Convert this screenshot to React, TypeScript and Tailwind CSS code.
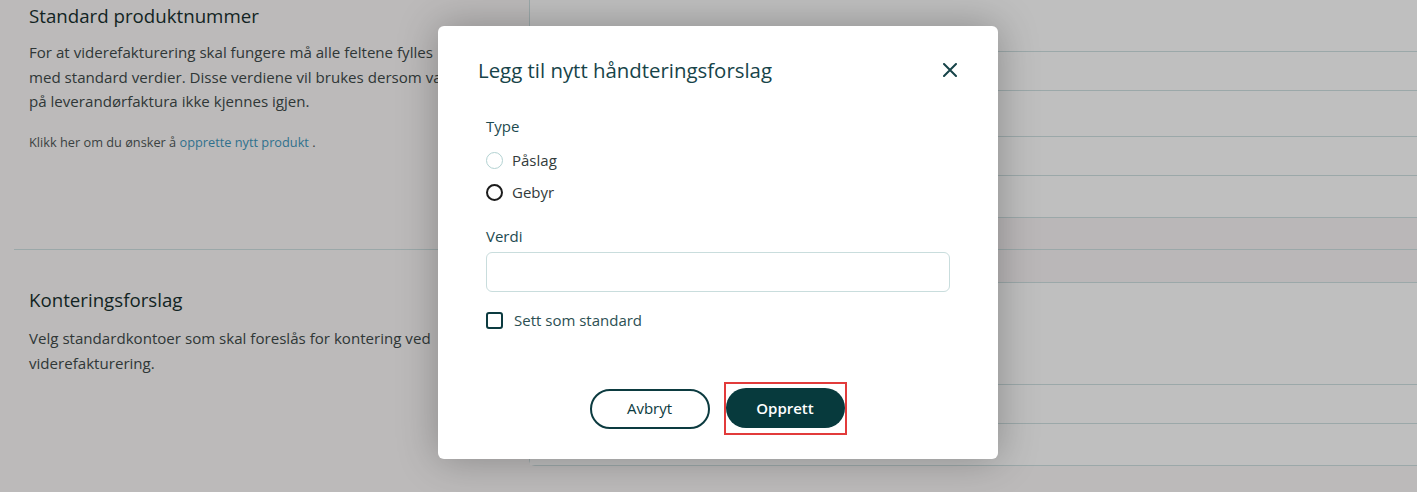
import React from "react";

const rows = [
  { h: "h-[52px]", dark: false },
  { h: "h-[39px]", dark: false },
  { h: "h-[46px]", dark: false },
  { h: "h-[39px]", dark: false },
  { h: "h-[42px]", dark: false },
  { h: "h-[32px]", dark: true },
  { h: "h-[33px]", dark: true },
  { h: "h-[102px]", dark: false },
  { h: "h-[39px]", dark: false },
  { h: "h-[41px]", dark: false },
];

export default function App() {
  return (
    <div
      className="relative h-[492px] w-full overflow-hidden bg-[#fbf9f9]"
      style={{ fontFamily: '"Open Sans", "Noto Sans", sans-serif' }}
    >
      {/* underlying page */}
      <div className="flex">
        <div className="w-[529px] shrink-0">
          <div className="ml-[14px] h-[250px] border-b border-[#cfe0e2] pl-[15px] pt-[3px]">
            <h2 className="text-[18.7px] leading-[26px] text-[#18302f]">Standard produktnummer</h2>
            <p className="mt-[11px] text-[15.1px] leading-[24.5px] text-[#404a4a] whitespace-nowrap">
              For at viderefakturering skal fungere må alle feltene fylles
              <br />
              med standard verdier. Disse verdiene vil brukes dersom varer
              <br />
              på leverandørfaktura ikke kjennes igjen.
            </p>
            <p className="mt-[19px] text-[12.75px] leading-[18px] text-[#4f5757]">
              Klikk her om du ønsker å <span className="text-[#3f97bd]">opprette nytt produkt</span> .
            </p>
          </div>
          <div className="ml-[14px] pl-[15px] pt-[37px]">
            <h2 className="text-[18.7px] leading-[26px] text-[#18302f]">Konteringsforslag</h2>
            <p className="mt-[13px] text-[15.1px] leading-[24.5px] text-[#404a4a] whitespace-nowrap">
              Velg standardkontoer som skal foreslås for kontering ved
              <br />
              viderefakturering.
            </p>
          </div>
        </div>
        <div className="flex-1 rounded-bl-md border-b border-l border-[#cfe0e2] bg-white">
          {rows.map((r, i) => (
            <div
              key={i}
              className={`${r.h} ${i < rows.length - 1 ? "border-b border-[#cfe0e2]" : ""} ${
                r.dark ? "bg-[#f8f5f6]" : "bg-white"
              }`}
            />
          ))}
        </div>
      </div>

      {/* overlay */}
      <div className="absolute inset-0 bg-black/25" />

      {/* modal */}
      <div className="absolute left-[438px] top-[26px] w-[560px] rounded-md bg-white pb-[24px] shadow-[0_0_40px_rgba(0,0,0,0.28)]">
        <div className="flex items-center justify-between pl-10 pr-[41px] pt-[30px]">
          <h3 className="text-[20.4px] leading-[28px] text-[#174449]">Legg til nytt håndteringsforslag</h3>
          <svg width="14" height="14" viewBox="0 0 14 14" className="text-[#174449]">
            <path d="M1 1 L13 13 M13 1 L1 13" stroke="currentColor" strokeWidth="2" strokeLinecap="round" />
          </svg>
        </div>
        <div className="px-12">
          <div className="mt-[31px] text-[15px] leading-[22px] text-[#1d4a4f]">Type</div>
          <div className="mt-[12px] flex h-[22px] items-center gap-[9px]">
            <span className="h-[17px] w-[17px] rounded-full border-[1.5px] border-[#b3d2d2]" />
            <span className="text-[15px] leading-[22px] text-[#333b3b]">Påslag</span>
          </div>
          <div className="mt-[10px] flex h-[22px] items-center gap-[9px]">
            <span className="h-[17px] w-[17px] rounded-full border-2 border-[#1c1c1c]" />
            <span className="text-[15px] leading-[22px] text-[#333b3b]">Gebyr</span>
          </div>
          <div className="mt-[22px] text-[15px] leading-[22px] text-[#1d4a4f]">Verdi</div>
          <div className="mt-[5px] h-[40px] w-full rounded-md border border-[#c9dddd]" />
          <div className="mt-[17px] flex h-[22px] items-center gap-[11px]">
            <span className="h-[17px] w-[17px] rounded-[3px] border-2 border-[#0c3b40]" />
            <span className="text-[15px] leading-[22px] text-[#2c4f52]">Sett som standard</span>
          </div>
          <div className="mt-[51px] flex items-center justify-center gap-[14px]">
            <button className="h-[40px] w-[120px] rounded-full border-2 border-[#0c3b40] text-[15px] text-[#0c3b40]">
              Avbryt
            </button>
            <div className="border-2 border-[#e23b3b] pb-[5px] pt-[4px]">
              <button className="h-[40px] w-[119px] rounded-full bg-[#073a3d] text-[15px] font-semibold text-white">
                Opprett
              </button>
            </div>
          </div>
        </div>
      </div>
    </div>
  );
}
